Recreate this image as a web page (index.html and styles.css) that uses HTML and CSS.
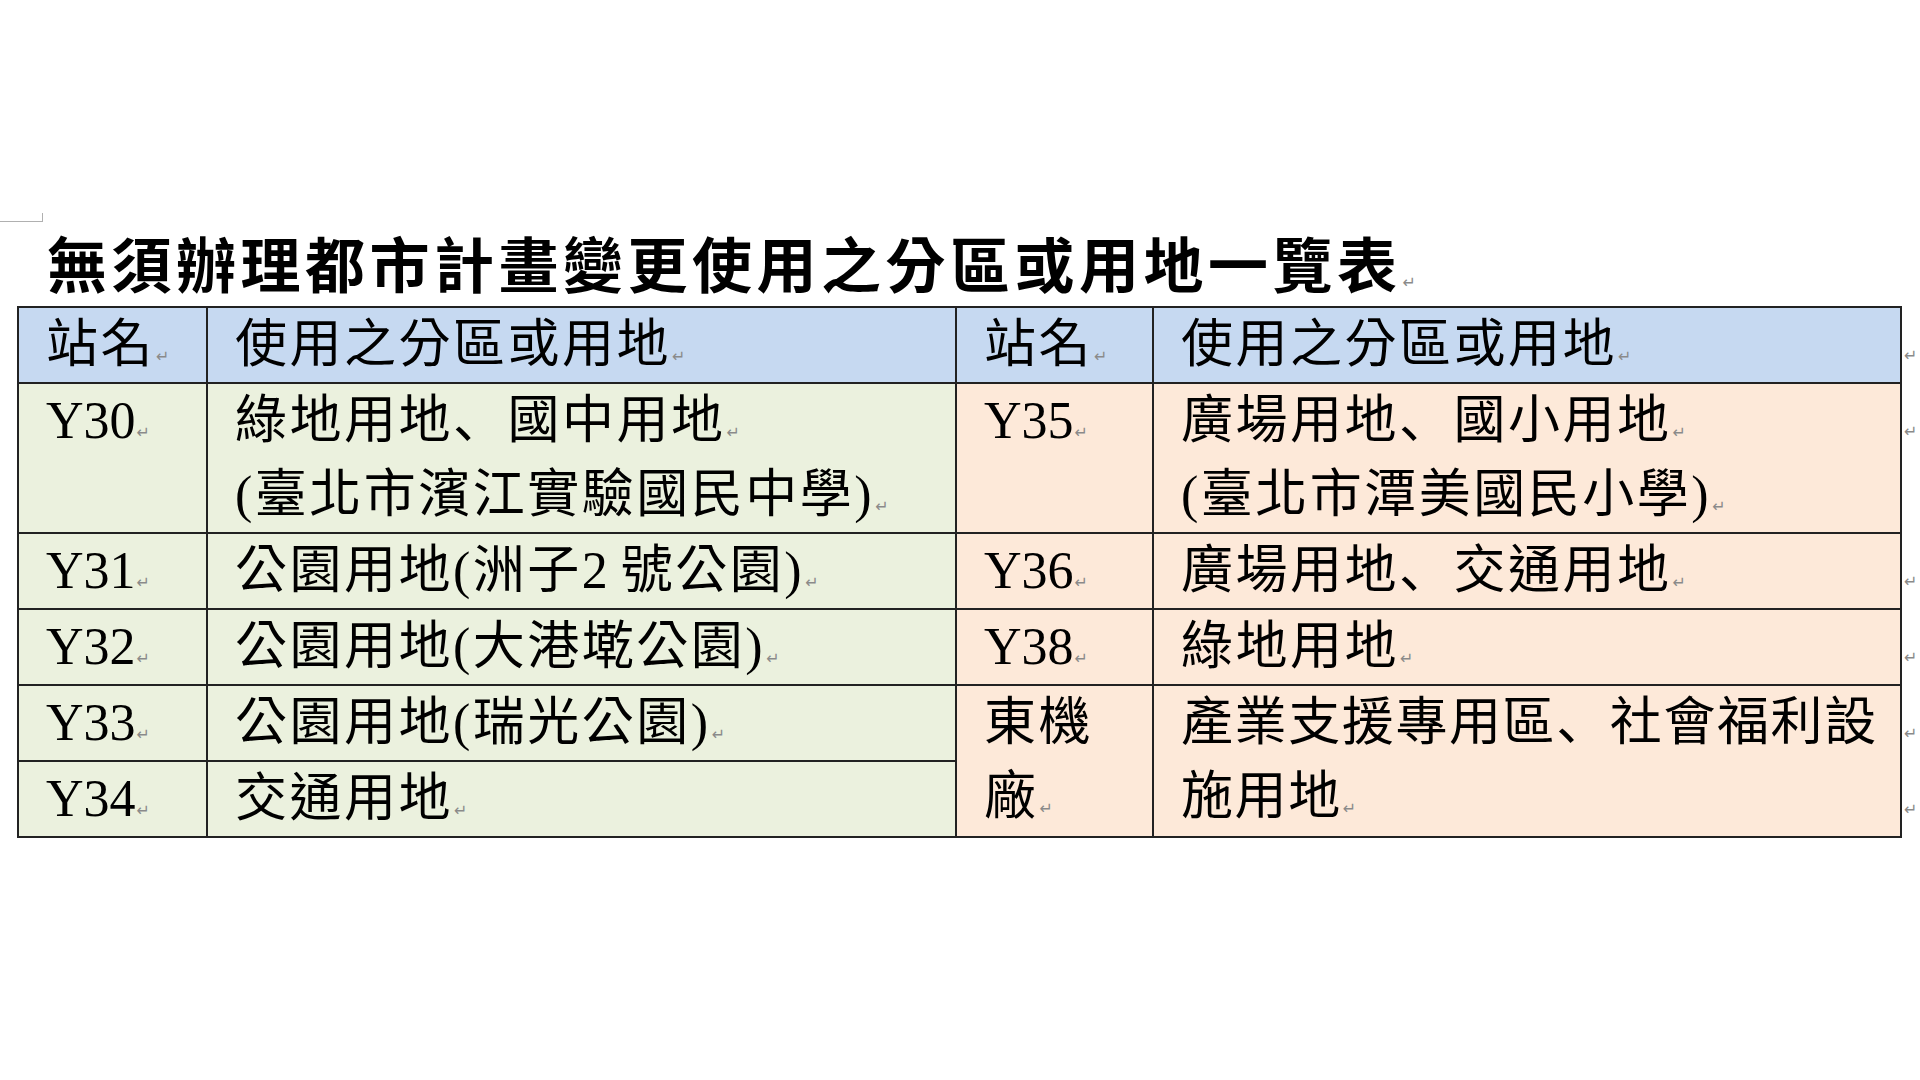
FILE: index.html
```html
<!DOCTYPE html>
<html lang="zh-Hant">
<head>
<meta charset="utf-8">
<title>無須辦理都市計畫變更使用之分區或用地一覽表</title>
<link rel="stylesheet" href="styles.css">
</head>
<body>
<div class="page">
  <div class="corner"></div>
  <h1 class="title">無須辦理都市計畫變更使用之分區或用地一覽表<span class="mark">↵</span></h1>
  <table class="list">
    <colgroup>
      <col class="c1"><col class="c2"><col class="c3"><col class="c4"><col class="c5">
    </colgroup>
    <tr class="head">
      <th>站名<span class="mark">↵</span></th>
      <th>使用之分區或用地<span class="mark">↵</span></th>
      <th>站名<span class="mark">↵</span></th>
      <th>使用之分區或用地<span class="mark">↵</span></th>
      <td class="eor"><span class="mark">↵</span></td>
    </tr>
    <tr>
      <td class="g"><span class="lat">Y30</span><span class="mark">↵</span></td>
      <td class="g">綠地用地<span class="dun" lang="zh-Hans">、</span>國中用地<span class="mark">↵</span><br>(臺北市濱江實驗國民中學)<span class="mark">↵</span></td>
      <td class="p"><span class="lat">Y35</span><span class="mark">↵</span></td>
      <td class="p">廣場用地<span class="dun" lang="zh-Hans">、</span>國小用地<span class="mark">↵</span><br>(臺北市潭美國民小學)<span class="mark">↵</span></td>
      <td class="eor"><span class="mark">↵</span></td>
    </tr>
    <tr>
      <td class="g"><span class="lat">Y31</span><span class="mark">↵</span></td>
      <td class="g">公園用地(洲子<span class="lat">2 </span>號公園)<span class="mark">↵</span></td>
      <td class="p"><span class="lat">Y36</span><span class="mark">↵</span></td>
      <td class="p">廣場用地<span class="dun" lang="zh-Hans">、</span>交通用地<span class="mark">↵</span></td>
      <td class="eor"><span class="mark">↵</span></td>
    </tr>
    <tr>
      <td class="g"><span class="lat">Y32</span><span class="mark">↵</span></td>
      <td class="g">公園用地(大港墘公園)<span class="mark">↵</span></td>
      <td class="p"><span class="lat">Y38</span><span class="mark">↵</span></td>
      <td class="p">綠地用地<span class="mark">↵</span></td>
      <td class="eor"><span class="mark">↵</span></td>
    </tr>
    <tr>
      <td class="g"><span class="lat">Y33</span><span class="mark">↵</span></td>
      <td class="g">公園用地(瑞光公園)<span class="mark">↵</span></td>
      <td class="p" rowspan="2">東機<br>廠<span class="mark">↵</span></td>
      <td class="p tight" rowspan="2">產業支援專用區<span class="dun" lang="zh-Hans">、</span>社會福利設<br>施用地<span class="mark">↵</span></td>
      <td class="eor"><span class="mark">↵</span></td>
    </tr>
    <tr>
      <td class="g"><span class="lat">Y34</span><span class="mark">↵</span></td>
      <td class="g">交通用地<span class="mark">↵</span></td>
      <td class="eor"><span class="mark">↵</span></td>
    </tr>
  </table>
</div>
</body>
</html>
```
FILE: styles.css
```css
html, body {
  margin: 0;
  padding: 0;
  background: #ffffff;
}

.page {
  width: 1920px;
  height: 1080px;
  overflow: hidden;
}

.corner {
  width: 42px;
  height: 8px;
  margin-top: 213px;
  border-right: 1px solid #b0b0b0;
  border-bottom: 1px solid #b0b0b0;
}

.title {
  margin: 0 0 0 47px;
  font-family: "Noto Sans CJK TC", sans-serif;
  font-weight: 700;
  font-size: 60px;
  line-height: 80px;
  letter-spacing: 4.5px;
  color: #000;
  white-space: nowrap;
}

.mark {
  font-family: "DejaVu Sans", sans-serif;
  font-weight: 400;
  font-size: 16px;
  line-height: 0;
  letter-spacing: 0;
  color: #8a8a8a;
  margin-left: 1px;
}

.list {
  border-collapse: collapse;
  table-layout: fixed;
  width: 1903px;
  margin: 4px 0 0 17px;
  font-family: "Liberation Serif", "Noto Sans CJK TC", serif;
  font-size: 52px;
  line-height: 74px;
  color: #000;
}

.c1 { width: 189px; }
.c2 { width: 749px; }
.c3 { width: 197px; }
.c4 { width: 748px; }
.c5 { width: 18px; }

.list th,
.list td {
  border: 2px solid #222;
  padding: 0 10px 0 27px;
  vertical-align: top;
  text-align: left;
  font-weight: 400;
  white-space: nowrap;
  letter-spacing: 2.5px;
  overflow: visible;
}

.list th {
  background: #c6d9f1;
}

.list td.g {
  background: #ebf1de;
}

.list td.p {
  background: #fde9d9;
}

.list td.tight {
  letter-spacing: 1.6px;
}

.list td.eor {
  border: none;
  padding: 0 0 0 1px;
  background: transparent;
}

.lat {
  letter-spacing: 0;
}

.dun {
  font-family: "Noto Sans CJK SC", sans-serif;
  line-height: 0;
}
```
